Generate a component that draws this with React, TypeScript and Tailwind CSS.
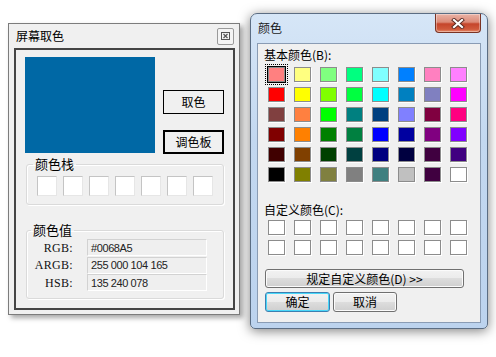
import React from "react";

const basic = [
  ["#FF8080", "#FFFF80", "#80FF80", "#00FF80", "#80FFFF", "#0080FF", "#FF80C0", "#FF80FF"],
  ["#FF0000", "#FFFF00", "#80FF00", "#00FF40", "#00FFFF", "#0080C0", "#8080C0", "#FF00FF"],
  ["#804040", "#FF8040", "#00FF00", "#008080", "#004080", "#8080FF", "#800040", "#FF0080"],
  ["#800000", "#FF8000", "#008000", "#008040", "#0000FF", "#0000A0", "#800080", "#8000FF"],
  ["#400000", "#804000", "#004000", "#004040", "#000080", "#000040", "#400040", "#400080"],
  ["#000000", "#808000", "#808040", "#808080", "#408080", "#C0C0C0", "#400040", "#FFFFFF"],
];

function Swatch({ color, selected }: { color: string; selected?: boolean }) {
  return (
    <div
      className="relative w-[17px] h-[15px] border border-[#8c8c8c] shadow-[1px_1px_0_#ffffff]"
      style={{ backgroundColor: color }}
    >
      {selected && (
        <>
          <span className="absolute -inset-[2px] border border-black" />
          <span className="absolute -inset-[4px] border border-dotted border-black" />
        </>
      )}
    </div>
  );
}

function Field({ label, value }: { label: string; value: string }) {
  return (
    <div className="flex items-center h-[17.5px]">
      <div className="w-[46px] text-right font-['Liberation_Serif',serif] text-[12px] leading-none text-[#111] tracking-[0.3px]">
        {label}
      </div>
      <div className="ml-[14px] w-[120px] h-[17px] border border-[#d2d2d2] border-b-white border-r-white bg-[#efefef] flex items-center pl-[3px] font-['Liberation_Sans',sans-serif] text-[11px] tracking-[-0.4px] text-[#222]">
        {value}
      </div>
    </div>
  );
}

export default function App() {
  return (
    <div className="w-[496px] h-[357px] bg-white flex items-start overflow-hidden font-['Noto_Sans_CJK_SC',sans-serif] text-black">
      {/* Left window */}
      <div className="ml-[8px] mt-[23px] w-[232px] h-[292px] border border-[#7c7c7c] bg-[#f0f0f0] shadow-[3px_3px_5px_rgba(0,0,0,0.35)] flex flex-col">
        <div className="h-[24px] flex items-center justify-between pl-[7px] pr-[5px]">
          <span className="text-[12px] leading-none">屏幕取色</span>
          <div className="w-[17px] h-[17px] border border-[#9a9a9a] rounded-[2px] flex items-center justify-center bg-[#f4f4f4]">
            <svg width="9" height="8" viewBox="0 0 9 8">
              <rect x="0.5" y="0.5" width="8" height="7" fill="none" stroke="#555" />
              <path d="M2.5 2 L6.5 6 M6.5 2 L2.5 6" stroke="#555" strokeWidth="1.2" />
            </svg>
          </div>
        </div>
        <div className="ml-[5px] w-[221px] h-[262px] border-2 border-[#454545] flex flex-col">
          <div className="flex ml-[9px] mt-[7px]">
            <div className="w-[130px] h-[96px] bg-[#0068A5]" />
            <div className="ml-[8px] flex flex-col pt-[33px] gap-[16px]">
              <div className="w-[61px] h-[24px] border border-black flex items-center justify-center text-[12px] leading-none bg-[#f0f0f0]">
                取色
              </div>
              <div className="w-[61px] h-[24px] border-2 border-black flex items-center justify-center text-[12px] leading-none bg-[#f0f0f0]">
                调色板
              </div>
            </div>
          </div>
          <fieldset className="ml-[10px] mt-[2px] w-[198px] border border-[#dadada] rounded-[3px] shadow-[inset_1px_1px_0_#ffffff,1px_1px_0_#ffffff] pl-[10px] pt-[4px] pb-[8px]">
            <legend className="-ml-[4px] px-[2px] text-[13px] leading-[16px]">颜色栈</legend>
            <div className="flex gap-[6px]">
              {Array.from({ length: 7 }).map((_, i) => (
                <div key={i} className="w-[20px] h-[20px] bg-white border border-[#c4c4c4] border-b-[#e6e6e6] border-r-[#e6e6e6]" />
              ))}
            </div>
          </fieldset>
          <fieldset className="ml-[10px] mt-[17px] w-[198px] border border-[#dadada] rounded-[3px] shadow-[inset_1px_1px_0_#ffffff,1px_1px_0_#ffffff] pt-[1px] pb-[6px]">
            <legend className="ml-[4px] px-[2px] text-[13px] leading-[16px]">颜色值</legend>
            <Field label="RGB:" value="#0068A5" />
            <Field label="ARGB:" value="255 000 104 165" />
            <Field label="HSB:" value="135 240 078" />
          </fieldset>
        </div>
      </div>

      {/* Right window */}
      <div className="ml-[10px] mt-[13px] w-[238px] h-[316px] border border-[#5b6d83] rounded-t-[7px] rounded-b-[5px] bg-[linear-gradient(to_bottom,#d6e6f7,#c3d8f0_40%,#bcd3ee)] shadow-[0_2px_12px_rgba(0,0,0,0.5)] flex flex-col">
        <div className="h-[29px] flex justify-between pl-[7px] pr-[6px]">
          <span className="mt-[7px] text-[12px] leading-[14px] text-[#1a1a1a]">颜色</span>
          <div className="w-[46px] h-[19px] rounded-b-[4px] border border-t-0 border-[#7a3324] bg-[linear-gradient(to_bottom,#eab3a6,#dc8b78_45%,#c5452b_55%,#d05a3c_85%,#e8906f)] flex items-center justify-center shadow-[inset_0_0_0_1px_rgba(255,255,255,0.35)]">
            <svg width="14" height="11" viewBox="0 0 14 11">
              <path d="M3 2 L11 9 M11 2 L3 9" stroke="#5a2a22" strokeWidth="4" strokeLinecap="square" />
              <path d="M3 2 L11 9 M11 2 L3 9" stroke="#ffffff" strokeWidth="2.2" strokeLinecap="square" />
            </svg>
          </div>
        </div>
        <div className="ml-[6px] w-[224px] h-[280px] border border-[#8a9cb4] bg-[#f0f0f0] flex flex-col">
          <div className="pl-[6px] mt-[3px] text-[12px] leading-[16px]">基本颜色(B):</div>
          <div className="pl-[10px] mt-[4px] grid grid-cols-[repeat(8,17px)] gap-x-[9px] gap-y-[5px]">
            {basic.flat().map((c, i) => (
              <Swatch key={i} color={c} selected={i === 0} />
            ))}
          </div>
          <div className="pl-[6px] mt-[20px] text-[12px] leading-[16px]">自定义颜色(C):</div>
          <div className="pl-[10px] mt-[2px] grid grid-cols-[repeat(8,17px)] gap-x-[9px] gap-y-[5px]">
            {Array.from({ length: 16 }).map((_, i) => (
              <Swatch key={i} color="#FFFFFF" />
            ))}
          </div>
          <div className="ml-[7px] mt-[14px] w-[199px] h-[19px] rounded-[3px] border border-[#707070] bg-[linear-gradient(to_bottom,#f2f2f2,#ebebeb_50%,#dddddd_50%,#cfcfcf)] shadow-[inset_0_0_0_1px_#fbfbfb] flex items-center justify-center text-[12px] leading-none">
            规定自定义颜色(D) &gt;&gt;
          </div>
          <div className="ml-[7px] mt-[4px] flex gap-[3px]">
            <div className="w-[65px] h-[20px] rounded-[3px] border border-[#3c7fb1] bg-[linear-gradient(to_bottom,#f2f2f2,#ebebeb_50%,#dddddd_50%,#cfcfcf)] shadow-[inset_0_0_0_1px_#48d7f9] flex items-center justify-center text-[12px] leading-none">
              确定
            </div>
            <div className="w-[64px] h-[20px] rounded-[3px] border border-[#707070] bg-[linear-gradient(to_bottom,#f2f2f2,#ebebeb_50%,#dddddd_50%,#cfcfcf)] shadow-[inset_0_0_0_1px_#fbfbfb] flex items-center justify-center text-[12px] leading-none">
              取消
            </div>
          </div>
        </div>
      </div>
    </div>
  );
}
